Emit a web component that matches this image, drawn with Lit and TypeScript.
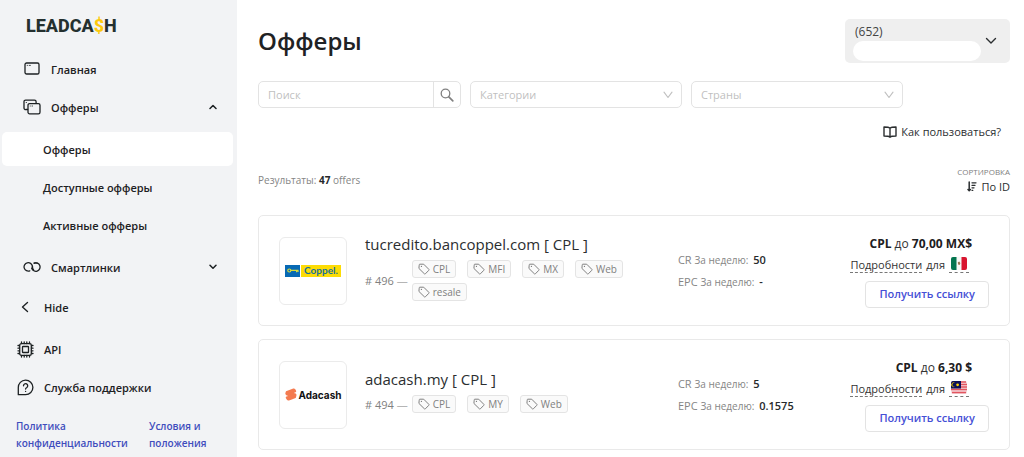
import { LitElement, html, svg, css, nothing } from "lit";
import { customElement, property } from "lit/decorators.js";

interface Offer {
  id: number;
  name: string;
  tags: string[];
  cr: string;
  epc: string;
  payout: string;
  logo: unknown;
  country: string;
  flag: unknown;
}

const icon = (w: number, h: number, body: unknown, stroke = 1.3) => html`
  <svg width=${w} height=${h} viewBox="0 0 ${w} ${h}" fill="none" stroke="currentColor"
    stroke-width=${stroke} stroke-linecap="round" stroke-linejoin="round" aria-hidden="true">${body}</svg>`;

const homeIcon = icon(16, 14, svg`<rect x="1" y="1" width="14" height="11" rx="1.6"/><path d="M3.2 3.400h.3M5.2 3.400h1.200" stroke-width=".8"/>`);
const offersIcon = icon(18, 16, svg`
  <path d="M4.600 10.500H3A1.600 1.600 0 0 1 1 8.900V2.700A1.600 1.600 0 0 1 2.600 1.100h8.900a1.600 1.600 0 0 1 1.600 1.600v1.500"/>
  <path d="M3.200 3.500h.2" stroke-width="1"/>
  <rect x="5" y="4.600" width="12" height="10.200" rx="1.600"/><path d="M7.200 7h.2M9 7h.6" stroke-width=".8"/>`);
const linkIcon = icon(18, 12, svg`
  <path d="M6.800 9.800A4.200 4.200 0 1 1 9.400 5.200Q9.600 6.400 9.200 7.600"/>
  <path d="M11.200 2.200A4.200 4.200 0 1 1 8.800 7.200"/>
  <path d="M9.400 5.200Q9.200 7.600 10.600 9M11.200 2.200Q13 1.400 14.500 2.200"/>`);
const backIcon = icon(8, 12, svg`<path d="M6.500 1.500 1.500 6l5 4.500"/>`, 1.400);
const apiIcon = icon(17, 17, svg`
  <rect x="2.700" y="2.700" width="11.600" height="11.600" rx="1.600"/><rect x="5.500" y="5.500" width="6" height="6" rx=".6"/>
  <path d="M4.500 2.500V1M7.200 2.500V1M9.800 2.500V1M12.500 2.500V1M4.500 16v-1.500M7.200 16v-1.500M9.800 16v-1.500M12.500 16v-1.500M2.500 4.500H1M2.500 7.200H1M2.500 9.800H1M2.500 12.500H1M16 4.500h-1.500M16 7.200h-1.500M16 9.800h-1.500M16 12.500h-1.500"/>`);
const helpIcon = icon(17, 17, svg`
  <path d="M1.300 15.700V8.600a7.300 7.300 0 1 1 7.300 7.100Z"/>
  <path d="M6.500 6.800a2.100 2.100 0 1 1 3.300 1.700c-.8.500-1.200.9-1.200 1.600"/><path d="M8.600 12.300v.1"/>`);
const chevronDown = icon(8, 6, svg`<path d="m1 1.200 3 3 3-3"/>`, 1.500);
const chevronUp = icon(8, 6, svg`<path d="m1 4.500 3-3 3 3"/>`, 1.500);
const wideChevron = icon(12, 8, svg`<path d="m1.500 1.500 4.500 4.500 4.500-4.500"/>`, 1.400);
const selectChevron = icon(10, 8, svg`<path d="M1 1.200 5 6.500l4-5.300"/>`, 1.100);
const searchIcon = icon(14, 14, svg`<circle cx="5.500" cy="5.500" r="4.300"/><path d="m8.800 8.800 4 4" stroke-width="1.700"/>`);
const bookIcon = icon(14, 12, svg`<path d="M7 2.200C6 1.300 5 1 1 1v9c4 0 5 .2 6 1.200 1-1 2-1.200 6-1.200V1C9 1 8 1.300 7 2.200Zm0 0v9"/>`, 1.400);
const sortIcon = icon(10, 11, svg`<path d="M2.200 1v8.500M1 8.500l1.200 1.300 1.200-1.300" stroke-width="1.500"/><path d="M5 1.800h4M5 4.300h3M5 6.800h2M5 9.300h.8" stroke-width="1.300"/>`);
const tagIcon = icon(12, 12, svg`<path d="M1.200 1.800q0-.6.600-.6h3.900l5.100 5.100q.5.500 0 1l-3.400 3.500q-.5.500-1 0L1.200 5.700Z"/><path d="M3.400 3.400h.1" stroke-width="1.200"/>`, 1);

const coppelLogo = html`
  <div class="coppel"><span class="key">
    <svg width="12" height="5" viewBox="0 0 12 5" fill="none" stroke="#d9dc3c" stroke-width="1.200" aria-hidden="true">
      <circle cx="2.300" cy="2.500" r="1.500"/><path d="M4 2.300h7.500M9.600 2.500v1.800M11 2.500v1.500"/></svg>
  </span><span class="coppel-name">Coppel.</span></div>`;

const adacashLogo = html`
  <div class="adacash">
    <svg width="12" height="13" viewBox="0 0 12 13" aria-hidden="true">
      <path fill="#f47b50" d="M1 3.200 8.300.600q1.100-.3 1.800.5l1 1.700q.4 1-.6 1.500L8.800 5l1.900.5q1.200.8.700 2.200l-.7 2.200L4 12.400q-1.400.4-2.100-.6L.800 10q-.3-1 .6-1.400L3.200 8 1.300 7.200Q.200 6.500.300 5.300Z"/>
    </svg><span>Adacash</span></div>`;

const mexicoFlag = html`
  <svg width="16" height="13" viewBox="0 0 16 13" aria-hidden="true">
    <rect width="16" height="13" rx="2" fill="#f7f7f5"/>
    <path d="M2 0h3.500v13H2a2 2 0 0 1-2-2V2a2 2 0 0 1 2-2Z" fill="#04754f"/>
    <path d="M14 0h-3.500v13H14a2 2 0 0 0 2-2V2a2 2 0 0 0-2-2Z" fill="#d8152f"/>
    <path d="M6.800 5.200 8.300 4.600l1.100 1.600-.8 1.800-1.500-.5Z" fill="#9a7550"/>
  </svg>`;

const malaysiaFlag = html`
  <svg width="16" height="13" viewBox="0 0 16 13" aria-hidden="true">
    <rect width="16" height="13" rx="2" fill="#f5d9dc"/>
    <path d="M1 1h14M0 3.500h16M0 6h16M0 8.500h16M1 11.500h14" stroke="#e2555f" stroke-width="1.300"/>
    <path d="M2 0h8v7.500H0V2a2 2 0 0 1 2-2Z" fill="#0a1059"/>
    <path d="M4.200 2.100a1.900 1.900 0 1 0 0 3.300 2.300 2.300 0 1 1 0-3.300Z" fill="#e8c400"/>
    <circle cx="6.600" cy="3.800" r="1.400" fill="#ffd500"/>
  </svg>`;

const offers: Offer[] = [
  { id: 496, name: "tucredito.bancoppel.com [ CPL ]", tags: ["CPL", "MFI", "MX", "Web", "resale"], cr: "50", epc: "-", payout: "70,00 MX$", logo: coppelLogo, country: "MX", flag: mexicoFlag },
  { id: 494, name: "adacash.my [ CPL ]", tags: ["CPL", "MY", "Web"], cr: "5", epc: "0.1575", payout: "6,30 $", logo: adacashLogo, country: "MY", flag: malaysiaFlag },
];

const base = css`
  * { box-sizing: border-box; }
  svg { display: block; flex: none; }
  a { color: inherit; text-decoration: none; }
  button, input, select { font: inherit; color: inherit; margin: 0; }
  button { cursor: pointer; }
`;

@customElement("app-sidebar")
export class AppSidebar extends LitElement {
  static styles = [base, css`
    :host { display: block; background: #f2f3f5; color: #1d2123; padding: 17px 4px 0 2px; font-size: 11px; font-weight: 600; }
    .logo { display: flex; padding-left: 24px; margin-bottom: 17px; }
    .logo-text { font-family: Roboto, sans-serif; font-size: 18px; line-height: 18px; font-weight: 800; color: #24302f; }
    .dollar { color: #fdc90c; }
    nav { display: flex; flex-direction: column; gap: 4px; }
    .item { display: flex; align-items: center; width: 100%; height: 34px; padding: 0 16px 0 21px; border: 0; border-radius: 5px; background: none; text-align: left; }
    .glyph { display: flex; justify-content: center; width: 18px; margin-right: 10px; }
    .label { flex: 1; }
    .sub { display: flex; flex-direction: column; gap: 4px; margin: 4px 0; }
    .sub .item { padding-left: 41px; }
    .sub .active { background: #fff; }
    .tools { margin-top: 6px; }
    .tools .item { padding-left: 14px; }
    .tools .item:first-child { margin-bottom: 4px; }
    .legal { display: grid; grid-template-columns: minmax(0, 133fr) minmax(0, 84fr); padding: 14px 0 4px 14px; line-height: 17px; font-size: 10px; color: #3f4dbd; }
  `];

  private item(label: string, glyph: unknown, chevron: unknown = nothing) {
    const body = html`<span class="glyph">${glyph}</span><span class="label">${label}</span>${chevron}`;
    return chevron === nothing
      ? html`<a class="item" href="#">${body}</a>`
      : html`<button class="item" type="button">${body}</button>`;
  }

  render() {
    return html`
      <a class="logo" href="#"><span class="logo-text">LEADCA<span class="dollar">$</span>H</span></a>
      <nav>
        ${this.item("Главная", homeIcon)}
        ${this.item("Офферы", offersIcon, chevronUp)}
        <div class="sub">
          <a class="item active" href="#">Офферы</a>
          <a class="item" href="#">Доступные офферы</a>
          <a class="item" href="#">Активные офферы</a>
        </div>
        ${this.item("Смартлинки", linkIcon, chevronDown)}
      </nav>
      <nav class="tools">
        ${this.item("Hide", backIcon)}
        ${this.item("API", apiIcon)}
        ${this.item("Служба поддержки", helpIcon)}
      </nav>
      <div class="legal">
        <a href="#">Политика<br>конфиденциальности</a>
        <a href="#">Условия и<br>положения</a>
      </div>`;
  }
}

@customElement("offer-card")
export class OfferCard extends LitElement {
  @property({ attribute: false }) offer!: Offer;

  static styles = [base, css`
    :host { display: grid; grid-template-columns: 68px minmax(0, 294fr) minmax(0, 154fr) auto; column-gap: 18px; align-items: center;
      min-height: 111px; padding: 15px 20px; border: 1px solid #e9e9e9; border-radius: 5px; }
    .thumb { display: flex; align-items: center; justify-content: center; height: 68px; border: 1px solid #ebebeb; border-radius: 6px; }
    .coppel { display: flex; height: 12px; font-size: 10px; line-height: 11px; font-weight: 700; font-family: Lato, sans-serif; }
    .key { display: flex; align-items: center; justify-content: center; width: 15px; background: #0769b4; }
    .coppel-name { width: 40px; margin-left: 1px; text-align: center; background: #fddc05; color: #16719a; }
    .adacash { display: flex; align-items: center; gap: 2px; font-family: Inter, sans-serif; font-size: 10px; line-height: 14px; font-weight: 700; color: #111; }
    .info { padding-bottom: 8px; }
    h2 { margin: 0 0 5px; font-size: 15px; line-height: 22px; font-weight: 400; color: #2b2e30; }
    .meta { display: flex; align-items: center; gap: 4px; color: #808080; font-size: 11px; }
    .id { flex: none; }
    .dash { color: #b5b5b5; }
    .tags { display: flex; flex-wrap: wrap; gap: 5px 11px; margin: 0; padding: 0; list-style: none; }
    .tag { display: flex; align-items: center; gap: 3px; height: 18px; padding: 0 5px; border: 1px solid #e4e4e4; border-radius: 3px; background: #fafafa; font-size: 10px; }
    .stats { display: grid; row-gap: 6px; font-size: 11px; line-height: 16px; color: #858585; }
    .stats small { font-size: 10px; }
    .stats b { margin-left: 2px; color: #26292b; font-weight: 600; }
    .actions { display: flex; flex-direction: column; align-items: flex-end; font-size: 12px; line-height: 20px; color: #333; }
    .payout { padding-right: 17px; }
    .payout b { font-weight: 700; color: #1d2022; }
    .details { display: flex; gap: 4px; padding-right: 20px; line-height: 16px; margin: 3px 0 8px; font-size: 11px; }
    .dashed { border-bottom: 1px dashed #777; height: 16px; }
    .flag { padding: 0 2px; }
    .get { height: 27px; padding: 0 13px; border: 1px solid #e3e3e3; border-radius: 4px; background: #fff; color: #4550d6; font-size: 11px; font-weight: 600; }
  `];

  render() {
    const o = this.offer;
    return html`
      <div class="thumb">${o.logo}</div>
      <div class="info">
        <h2>${o.name}</h2>
        <div class="meta">
          <span class="id"># ${o.id} <span class="dash">—</span></span>
          <ul class="tags">${o.tags.map((t) => html`<li class="tag">${tagIcon}${t}</li>`)}</ul>
        </div>
      </div>
      <div class="stats">
        <div>CR <small>За неделю:</small> <b>${o.cr}</b></div>
        <div>EPC <small>За неделю:</small> <b>${o.epc}</b></div>
      </div>
      <div class="actions">
        <div class="payout"><b>CPL</b> до <b>${o.payout}</b></div>
        <div class="details"><a class="dashed" href="#">Подробности</a> для
          <a class="dashed flag" href="#" aria-label=${o.country}>${o.flag}</a></div>
        <button class="get" type="button">Получить ссылку</button>
      </div>`;
  }
}

@customElement("app-root")
export class AppRoot extends LitElement {
  static styles = [base, css`
    :host { display: grid; grid-template-columns: 237px minmax(0, 1fr); min-height: 100vh; background: #fff;
      font-family: "Open Sans", "Noto Sans", sans-serif; font-size: 11px; color: #2b2e30; }
    main { padding: 19px 14px 7px 21px; }
    header { display: flex; align-items: center; justify-content: space-between; }
    h1 { margin: 0; font-size: 24px; line-height: 36px; font-weight: 600; color: #1f2224; }
    .account { display: flex; align-items: center; gap: 4px; width: 165px; height: 44px; padding: 0 13px 0 8px; border: 0; border-radius: 5px; background: #efefef; font-size: 12px; text-align: left; }
    .account-info { flex: 1; padding-top: 2px; }
    .account-id { display: block; padding-left: 2px; line-height: 18px; color: #444; }
    .account-name { display: block; height: 20px; border-radius: 10px; background: #fff; }
    .filters { display: grid; grid-template-columns: 203fr 212fr 212fr 98fr; gap: 9px; margin-top: 18px; }
    .search { display: flex; height: 27px; border: 1px solid #e3e3e3; border-radius: 5px; color: #808080; }
    .search input { flex: 1; min-width: 0; padding: 0 9px; border: 0; background: none; outline: 0; }
    ::placeholder { color: #bfbfbf; opacity: 1; }
    .search button { display: flex; align-items: center; justify-content: center; width: 27px; padding: 0; border: 0; border-left: 1px solid #e3e3e3; background: none; }
    .pick { display: grid; align-items: center; height: 27px; color: #bfbfbf; }
    .pick select { grid-area: 1 / 1; width: 100%; height: 27px; padding: 0 9px; border: 1px solid #e3e3e3; border-radius: 5px; background: #fff; appearance: none; }
    .pick svg { grid-area: 1 / 1; justify-self: end; margin-right: 9px; pointer-events: none; }
    .help { display: flex; align-items: center; justify-content: flex-end; gap: 4px; margin: 15px 9px 0 0; line-height: 18px; }
    .summary { display: flex; align-items: center; justify-content: space-between; margin: 24px 0 20px; }
    .results { font-size: 10px; color: #858585; }
    .results b { color: #26292b; font-weight: 700; }
    .sort { display: grid; justify-items: end; }
    .sort-label { font-size: 8px; line-height: 13px; color: #808080; text-transform: uppercase; }
    .sort-by { display: flex; align-items: center; gap: 4px; padding: 0; border: 0; background: none; line-height: 17px; }
    .list { display: grid; gap: 13px; }
  `];

  render() {
    return html`
      <app-sidebar></app-sidebar>
      <main>
        <header>
          <h1>Офферы</h1>
          <button class="account" type="button">
            <span class="account-info"><span class="account-id">(652)</span><span class="account-name"></span></span>
            ${wideChevron}
          </button>
        </header>
        <form class="filters">
          <div class="search">
            <input type="text" placeholder="Поиск" aria-label="Поиск">
            <button type="button" aria-label="Поиск">${searchIcon}</button>
          </div>
          <div class="pick"><select aria-label="Категории"><option>Категории</option></select>${selectChevron}</div>
          <div class="pick"><select aria-label="Страны"><option>Страны</option></select>${selectChevron}</div>
        </form>
        <a class="help" href="#">${bookIcon}<span>Как пользоваться?</span></a>
        <div class="summary">
          <div class="results">Результаты: <b>47</b> offers</div>
          <div class="sort">
            <span class="sort-label">Сортировка</span>
            <button class="sort-by" type="button">${sortIcon}По ID</button>
          </div>
        </div>
        <section class="list">${offers.map((o) => html`<offer-card .offer=${o}></offer-card>`)}</section>
      </main>`;
  }
}
